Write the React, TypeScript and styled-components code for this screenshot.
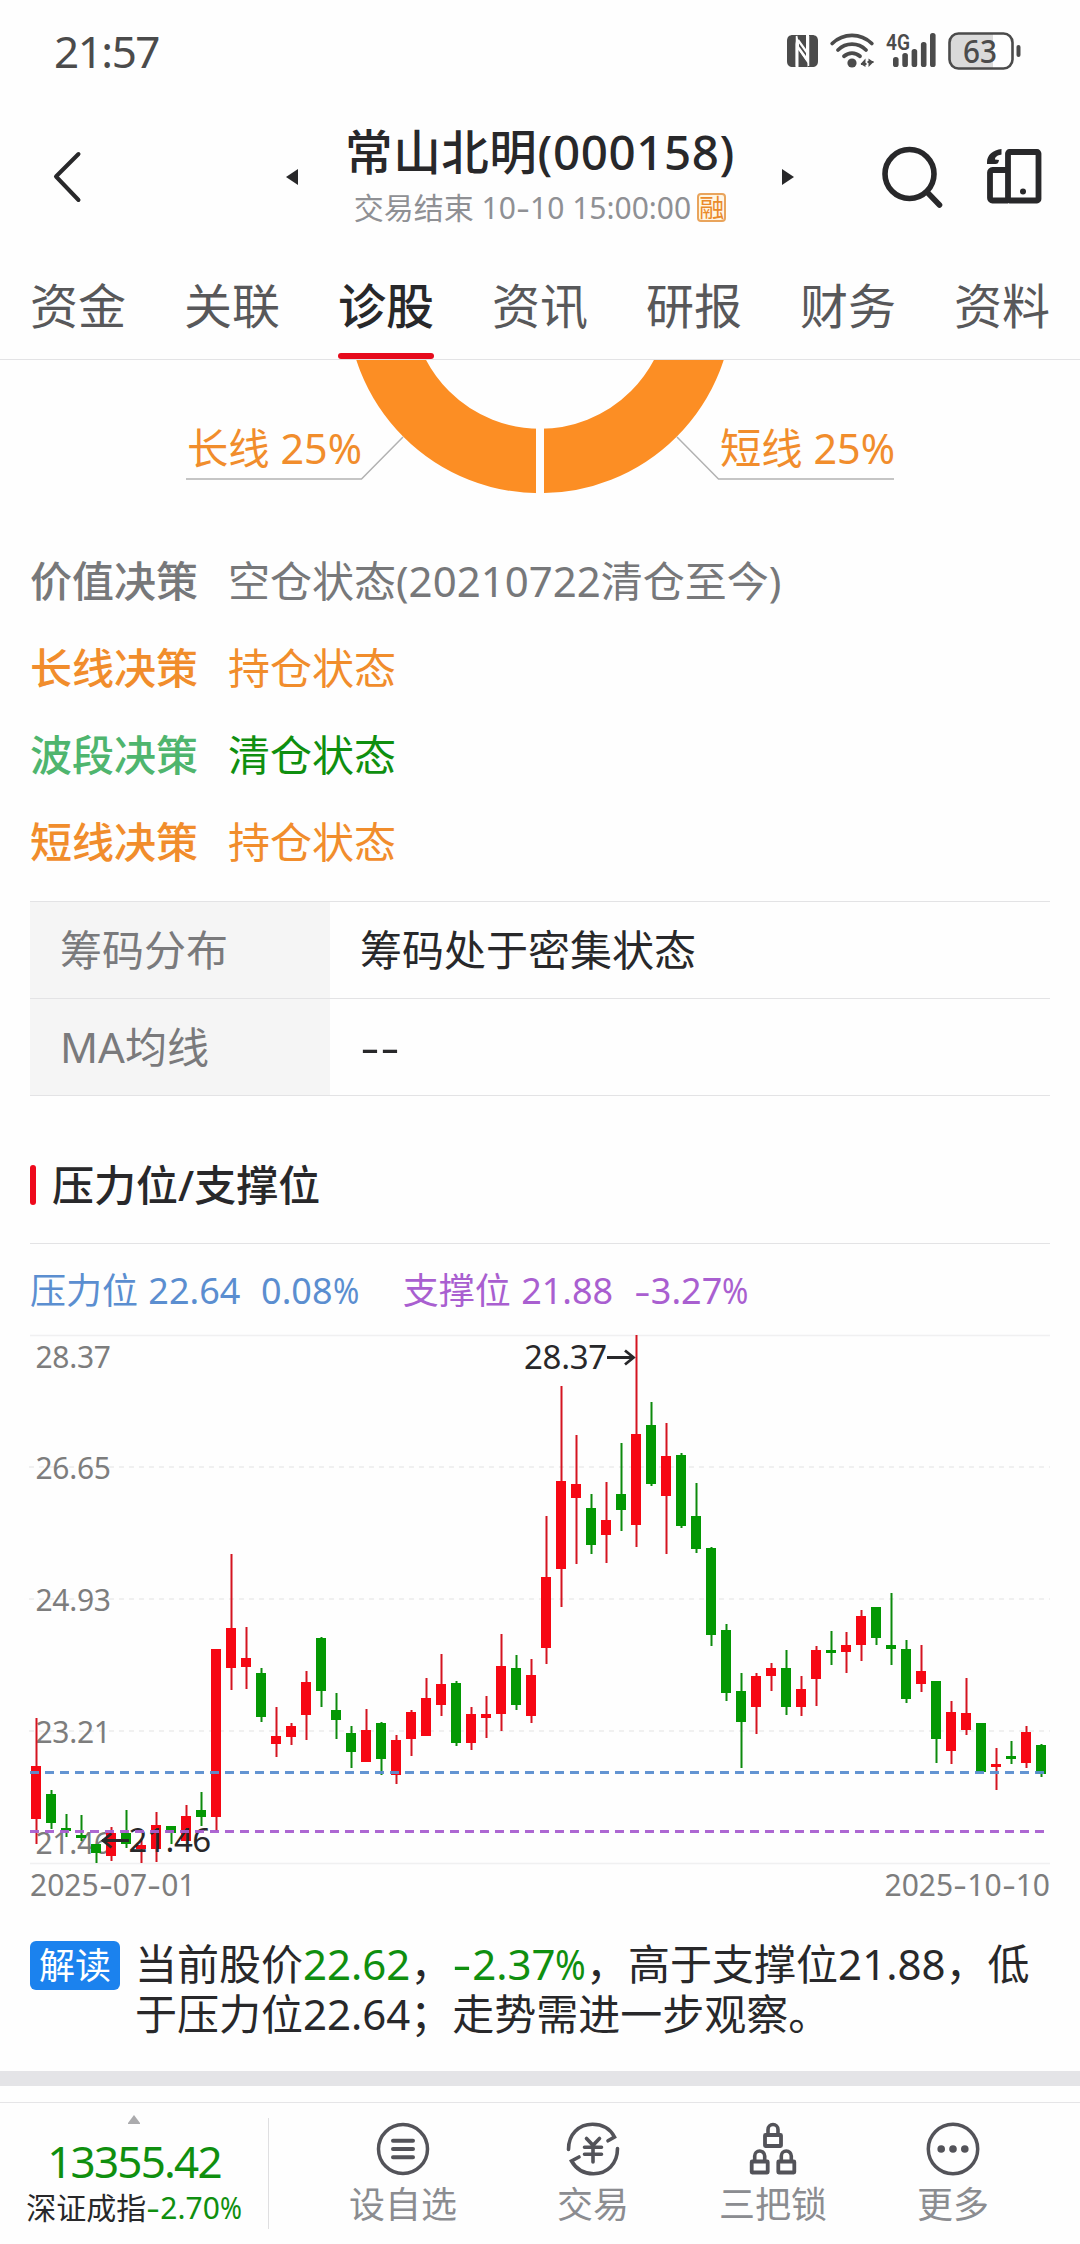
import React from 'react';
import styled, { createGlobalStyle } from 'styled-components';

const GlobalStyle = createGlobalStyle`
  * { box-sizing: border-box; }
  body {
    margin: 0;
    background: #fefefe;
    font-family: "Noto Sans", "Noto Sans CJK SC", sans-serif;
    color: #28282a;
  }
  svg { display: block; overflow: visible; }
`;

const ORANGE = '#f18d2c';
const GREEN = '#0f8f0f';
const BLUE = '#5b8ed0';
const PURPLE = '#a95fd0';

const Screen = styled.div`
  width: 1080px;
  height: 2244px;
  display: flex;
  flex-direction: column;
  overflow: hidden;
  background: #fefefe;
`;

const StatusBar = styled.div`
  height: 104px;
  flex: none;
  display: flex;
  align-items: center;
  justify-content: space-between;
  padding: 0 58px 3px 54px;
  color: #4b4b4b;
`;

const Clock = styled.span`
  font-size: 44px;
  line-height: 60px;
  letter-spacing: -1.5px;
`;

const StatusIcons = styled.div`
  display: flex;
  align-items: center;
  gap: 12px;
`;

const Header = styled.header`
  height: 146px;
  flex: none;
  display: flex;
  align-items: center;
  padding: 0 38px 1px 48px;
`;

const BackButton = styled.div`
  width: 238px;
`;

const TitleBlock = styled.div`
  width: 484px;
  display: flex;
  flex-direction: column;
  align-items: center;
`;

const Title = styled.div`
  font-size: 47.5px;
  line-height: 62px;
  font-weight: 500;
  letter-spacing: 0.6px;
`;

const Subtitle = styled.div`
  display: flex;
  align-items: center;
  gap: 6px;
  font-size: 30px;
  line-height: 50px;
  color: #8f9094;
`;

const MarginBadge = styled.span`
  width: 29px;
  height: 29px;
  display: flex;
  align-items: center;
  justify-content: center;
  border: 2px solid #e9a45c;
  border-radius: 4px;
  background: #fff6e4;
  color: #ea8a2a;
  font-size: 25px;
  line-height: 25px;
`;

const HeaderActions = styled.div`
  margin-left: auto;
  display: flex;
  align-items: center;
  gap: 44px;
`;

const Tabs = styled.nav`
  height: 110px;
  flex: none;
  display: flex;
  justify-content: space-between;
  padding: 0 30px;
  border-bottom: 1px solid #e3e3e5;
`;

const Tab = styled.div<{ $active?: boolean }>`
  display: flex;
  flex-direction: column;
  justify-content: space-between;
  font-size: 48px;
  line-height: 64px;
  padding-top: 24px;
  font-weight: ${(p) => (p.$active ? 500 : 400)};
  color: ${(p) => (p.$active ? '#28282a' : '#58585a')};
  &::after {
    content: '';
    height: 6px;
    border-radius: 3px;
    background: ${(p) => (p.$active ? '#e60b1c' : 'transparent')};
  }
`;

const DonutArea = styled.div`
  height: 177px;
  flex: none;
`;

const Decisions = styled.section`
  flex: none;
  padding: 0 30px;
  height: 364px;
`;

const Decision = styled.div`
  display: flex;
  gap: 30px;
  height: 87px;
  align-items: center;
  font-size: 42px;
  line-height: 60px;
`;

const DecisionName = styled.span<{ $color: string }>`
  font-weight: 500;
  color: ${(p) => p.$color};
`;

const DecisionState = styled.span<{ $color: string }>`
  color: ${(p) => p.$color};
`;

const FactTable = styled.div`
  flex: none;
  margin: 0 30px;
  border-top: 1px solid #e3e3e5;
`;

const FactRow = styled.div`
  height: 97px;
  display: flex;
  border-bottom: 1px solid #e3e3e5;
  font-size: 42px;
  line-height: 60px;
`;

const FactLabel = styled.div`
  width: 300px;
  display: flex;
  align-items: center;
  padding-left: 30px;
  background: #f5f5f5;
  color: #7a7a7c;
`;

const FactValue = styled.div`
  flex: 1;
  display: flex;
  align-items: center;
  padding-left: 30px;
`;

const SectionTitle = styled.h2`
  flex: none;
  margin: 47px 30px 0;
  height: 101px;
  display: flex;
  align-items: center;
  gap: 16px;
  border-bottom: 1px solid #e3e3e5;
  padding-bottom: 17px;
  font-size: 42px;
  line-height: 60px;
  font-weight: 500;
  &::before {
    content: '';
    width: 6px;
    height: 40px;
    border-radius: 3px;
    background: #ee0a1c;
  }
`;

const Legend = styled.div`
  flex: none;
  height: 91px;
  padding: 2px 30px 0;
  display: flex;
  align-items: center;
  gap: 44px;
  font-size: 36px;
  line-height: 50px;
  word-spacing: 1px;
`;

const LegendItem = styled.span<{ $color: string }>`
  color: ${(p) => p.$color};
  white-space: pre;
`;

const ChartArea = styled.div`
  flex: none;
  margin: 0 30px;
  height: 529px;
`;

const DateAxis = styled.div`
  flex: none;
  display: flex;
  justify-content: space-between;
  margin: 0 30px;
  height: 75px;
  font-size: 30px;
  line-height: 42px;
  color: #7d7d7d;
`;

const Reading = styled.section`
  flex: none;
  display: flex;
  align-items: flex-start;
  gap: 15px;
  padding: 0 30px;
  height: 132px;
`;

const ReadingTag = styled.span`
  flex: none;
  width: 90px;
  height: 49px;
  margin-top: 2px;
  display: flex;
  align-items: center;
  justify-content: center;
  border-radius: 6px;
  background: #1b82ee;
  color: #fff;
  font-size: 36px;
  line-height: 49px;
`;

const ReadingText = styled.p`
  margin: 0;
  font-size: 42px;
  line-height: 49.5px;
`;

const Down = styled.span`
  color: ${GREEN};
`;

const Hyphen = styled.span`
  display: inline-block;
  width: 0.47em;
  text-align: center;
  transform: scaleX(1.4);
`;

const Percent = styled.span`
  display: inline-block;
  width: 0.73em;
  transform: scaleX(0.88);
  transform-origin: 0 50%;
`;

/* Quote figures: a wide hyphen and a narrow percent sign beside the digits */
function Figures({ children }: { children: string }) {
  return (
    <>
      {children.split(/([-%])/).map((part, i) => {
        if (part === '-') return <Hyphen key={i}>-</Hyphen>;
        if (part === '%') return <Percent key={i}>%</Percent>;
        return part;
      })}
    </>
  );
}

const Band = styled.div`
  flex: none;
  height: 15px;
  background: #e4e4e7;
`;

const BottomBar = styled.footer`
  flex: 1;
  margin-top: 16px;
  border-top: 1px solid #e5e5e7;
  display: flex;
  align-items: flex-start;
`;

const IndexPanel = styled.div`
  width: 269px;
  height: 111px;
  margin-top: 15px;
  display: flex;
  flex-direction: column;
  align-items: center;
  border-right: 1px solid #dfdfe1;
  & > svg { margin-top: -3px; }
`;

const IndexValue = styled.div`
  margin-top: 7px;
  font-size: 44px;
  line-height: 60px;
  letter-spacing: -1.8px;
  color: ${GREEN};
`;

const IndexName = styled.div`
  font-size: 30px;
  line-height: 34px;
  white-space: nowrap;
`;

const NavItems = styled.div`
  display: flex;
  padding: 19px 0 0 44px;
`;

const NavItem = styled.div<{ $gap?: number }>`
  width: 180px;
  margin-right: ${(p) => p.$gap || 0}px;
  display: flex;
  flex-direction: column;
  align-items: center;
  gap: 3px;
  font-size: 36px;
  line-height: 52px;
  color: #8b8c90;
`;

/* [rising, high, body top, body bottom, low] on the 1335..1863 vertical scale */
type Candle = [number, number, number, number, number];
const candles: Candle[] = [
  [1, 1718, 1766, 1819, 1844], [0, 1790, 1794, 1823, 1829], [0, 1814, 1828, 1831, 1837], [0, 1815, 1835, 1838, 1841],
  [0, 1844, 1844, 1853, 1863], [1, 1827, 1833, 1856, 1861], [0, 1810, 1833, 1844, 1848], [1, 1839, 1845, 1849, 1863],
  [1, 1812, 1825, 1849, 1862], [0, 1826, 1826, 1833, 1844], [1, 1805, 1816, 1841, 1841], [0, 1792, 1810, 1817, 1826],
  [1, 1649, 1649, 1817, 1831], [1, 1554, 1628, 1668, 1690], [1, 1627, 1658, 1667, 1689], [0, 1668, 1673, 1717, 1722],
  [1, 1707, 1736, 1744, 1757], [1, 1723, 1726, 1737, 1745], [1, 1671, 1682, 1715, 1740], [0, 1637, 1638, 1691, 1707],
  [0, 1693, 1710, 1720, 1739], [0, 1726, 1733, 1752, 1768], [1, 1709, 1730, 1762, 1762], [0, 1722, 1723, 1759, 1775],
  [1, 1735, 1740, 1775, 1784], [1, 1710, 1712, 1739, 1756], [1, 1678, 1698, 1736, 1736], [1, 1654, 1684, 1705, 1716],
  [0, 1681, 1683, 1743, 1746], [1, 1707, 1714, 1743, 1750], [1, 1696, 1714, 1718, 1738], [1, 1634, 1666, 1714, 1731],
  [0, 1655, 1668, 1705, 1710], [1, 1659, 1675, 1716, 1723], [1, 1516, 1577, 1648, 1664], [1, 1386, 1481, 1569, 1607],
  [1, 1435, 1484, 1498, 1564], [0, 1494, 1508, 1545, 1554], [1, 1482, 1520, 1535, 1563], [0, 1443, 1494, 1510, 1531],
  [1, 1335, 1434, 1525, 1547], [0, 1402, 1425, 1484, 1486], [1, 1423, 1456, 1496, 1554], [0, 1453, 1455, 1526, 1528],
  [0, 1483, 1516, 1549, 1553], [0, 1547, 1548, 1635, 1646], [0, 1624, 1630, 1693, 1701], [0, 1673, 1691, 1722, 1768],
  [1, 1673, 1676, 1707, 1734], [1, 1663, 1668, 1676, 1691], [0, 1650, 1668, 1707, 1715], [1, 1676, 1689, 1707, 1716],
  [1, 1646, 1650, 1679, 1706], [0, 1631, 1650, 1653, 1665], [1, 1632, 1645, 1652, 1673], [1, 1610, 1616, 1645, 1661],
  [0, 1607, 1607, 1638, 1645], [0, 1593, 1645, 1649, 1665], [0, 1640, 1649, 1699, 1703], [1, 1645, 1671, 1684, 1692],
  [0, 1681, 1681, 1739, 1763], [1, 1701, 1712, 1751, 1764], [1, 1678, 1713, 1730, 1735], [0, 1723, 1723, 1772, 1772],
  [1, 1748, 1764, 1767, 1790], [0, 1741, 1756, 1759, 1764], [1, 1726, 1732, 1763, 1768], [0, 1744, 1745, 1774, 1777],
];

const AxisText = styled.text`
  font-size: 30px;
  fill: #7d7d7d;
`;

const MarkText = styled.text`
  font-size: 33px;
  fill: #28282a;
`;

const axisLabels: [string, number][] = [
  ['28.37', 1368], ['26.65', 1479], ['24.93', 1611], ['23.21', 1743], ['21.46', 1854],
];

function CandleChart() {
  return (
    <svg width="1020" height="529" viewBox="30 1335 1020 529">
      <path d="M30 1335.5H1050M30 1863.5H1050" stroke="#f0f0f1" strokeWidth="1.4" />
      {[1467, 1599, 1731].map((y) => (
        <path key={y} d={`M29 ${y}H1050`} stroke="#f0f0f0" strokeWidth="2" strokeDasharray="5 5" />
      ))}
      {axisLabels.map(([label, y]) => (
        <AxisText key={label} x="35.5" y={y} letterSpacing="-0.3">{label}</AxisText>
      ))}
      {candles.map(([up, high, top, bottom, low], i) => {
        const x = 31 + i * 15;
        return (
          <g key={i}>
            <path d={`M${x + 5.5} ${high}V${low}`} stroke={up ? '#d41420' : '#0d8a0d'} strokeWidth="2" />
            <rect x={x} y={top} width="10" height={bottom - top} fill={up ? '#f60713' : '#039803'} />
          </g>
        );
      })}
      <path d="M607 1357.5H634M625 1350.5l8.5 7l-8.5 7" fill="none" stroke="#28282a" strokeWidth="2.8" />
      <MarkText x="524" y="1369" letterSpacing="-0.3">28.37</MarkText>
      <path d="M129 1840.5H102M111.5 1833.5l-8.5 7l8.5 7" fill="none" stroke="#28282a" strokeWidth="2.8" />
      <MarkText x="128.5" y="1852" letterSpacing="-0.4">21.46</MarkText>
      <path d="M30 1772.5H1045" stroke={BLUE} strokeOpacity="0.95" strokeWidth="3" strokeDasharray="9 6" />
      <path d="M30 1831.5H1045" stroke={PURPLE} strokeOpacity="0.95" strokeWidth="3" strokeDasharray="9 6" />
    </svg>
  );
}

const SliceText = styled.text`
  font-size: 42px;
  fill: ${ORANGE};
`;

function Donut() {
  return (
    <svg width="1080" height="177" viewBox="0 360 1080 177">
      <defs>
        <clipPath id="belowTabs"><rect x="0" y="360" width="1080" height="177" /></clipPath>
      </defs>
      <g clipPath="url(#belowTabs)">
        <circle cx="540" cy="300" r="161" fill="none" stroke="#fc8e24" strokeWidth="64.5" />
        <rect x="536" y="400" width="8" height="100" fill="#fefefe" />
      </g>
      <path d="M186 479H361.500L403 437" fill="none" stroke="#b2b2b2" strokeWidth="1.5" />
      <path d="M894 479H718.500L677 437" fill="none" stroke="#b2b2b2" strokeWidth="1.5" />
      <SliceText x="187" y="464" textLength="175" lengthAdjust="spacingAndGlyphs">长线 25%</SliceText>
      <SliceText x="720" y="464" textLength="175" lengthAdjust="spacingAndGlyphs">短线 25%</SliceText>
    </svg>
  );
}

function NfcIcon() {
  return (
    <svg width="31" height="32" viewBox="0 0 31 32">
      <path d="M6 0h4l-1.500 9v23H6c-4 0-6-2-6-6V6c0-4 2-6 6-6z" fill="#4b4b4b" />
      <path d="M25 0h-3v22l-1.500 10H25c4 0 6-2 6-6V6c0-4-2-6-6-6z" fill="#4b4b4b" />
      <path d="M10 0h9v18L12 8zM19 14v8l-7-9v-6zM11.500 32V15l9 13v4z" fill="#4b4b4b" />
      <path d="M11 5l9 12.500M11 12l9 12.500" stroke="#fefefe" strokeWidth="2.200" />
      <path d="M9.500 1v30M21.500 1v30" stroke="#fefefe" strokeWidth="1.500" />
    </svg>
  );
}

function WifiIcon() {
  return (
    <svg width="44" height="35" viewBox="0 0 44 35">
      <g fill="none" stroke="#4b4b4b" strokeWidth="3.8" strokeLinecap="round">
        <path d="M2.200 10.500C13.500-.300 30.500-.300 41.800 10.500" />
        <path d="M8 17c8-7.800 20-7.800 28 0" />
        <path d="M14 23.200c4.800-4.200 11.200-4.200 16 0" />
      </g>
      <circle cx="22" cy="30" r="4.6" fill="#4b4b4b" />
      <path d="M35.500 25.500V34l-5-3zM38.500 34v-8.500l5 3.500z" fill="#4b4b4b" />
      <path d="M31 31h5.500M37.500 29h6" stroke="#4b4b4b" strokeWidth="1.8" />
    </svg>
  );
}

const NetText = styled.text`
  font-family: Roboto, sans-serif;
  font-size: 22px;
  font-weight: 600;
  fill: #4b4b4b;
`;

function SignalIcon() {
  const bars = [[7, 24], [16.3, 20], [25.6, 16], [34.9, 9], [44, 0]];
  return (
    <svg width="50" height="35" viewBox="0 0 50 35">
      <NetText x="0" y="16.5" textLength="24" lengthAdjust="spacingAndGlyphs">4G</NetText>
      {bars.map(([x, y]) => (
        <rect key={x} x={x} y={y} width="5.6" height={34 - y} rx="2.6" fill="#4b4b4b" />
      ))}
    </svg>
  );
}

const BatteryText = styled.text`
  font-size: 32px;
  font-weight: 500;
  fill: #4b4b4b;
`;

function BatteryIcon() {
  return (
    <svg width="74" height="38" viewBox="0 0 74 38">
      <path d="M11 1.500h34v35H11a9.500 9.500 0 0 1-9.500-9.500V11A9.500 9.500 0 0 1 11 1.500z" fill="#dadada" />
      <rect x="1.5" y="1.5" width="63" height="35" rx="9" fill="none" stroke="#4b4b4b" strokeWidth="2.6" />
      <rect x="68.5" y="13" width="4" height="12" rx="2" fill="#4b4b4b" />
      <BatteryText x="15" y="30.5" textLength="34" lengthAdjust="spacingAndGlyphs">63</BatteryText>
    </svg>
  );
}

function SearchIcon() {
  return (
    <svg width="62" height="62" viewBox="0 0 62 62" fill="none" stroke="#28282a" strokeWidth="5.6">
      <circle cx="28.5" cy="28" r="24.5" />
      <path d="M46 46L58.500 59" strokeLinecap="round" />
    </svg>
  );
}

function DevicesIcon() {
  return (
    <svg width="55" height="55" viewBox="0 0 55 55" fill="none" stroke="#28282a" strokeWidth="5.8" strokeLinejoin="round">
      <rect x="21" y="3" width="30.5" height="48.5" rx="1.5" />
      <path d="M21 21H5.500c-1.500 0-2.500 1-2.500 2.500v25.500c0 1.500 1 2.500 2.500 2.500H21" />
      <circle cx="36" cy="42.5" r="3" fill="#28282a" stroke="none" />
      <path d="M14.500 0C6 1 0 6 0 13v2h8.500c2 0 3-1 3.500-4l-4-.500C8 8 10 6.500 14.500 5.500z" fill="#28282a" stroke="none" />
    </svg>
  );
}

function ListIcon() {
  return (
    <svg width="54" height="54" viewBox="0 0 54 54" fill="none" stroke="#535359" strokeLinecap="round">
      <circle cx="27" cy="27" r="24.5" strokeWidth="3.5" />
      <path d="M17 18.700h20M17 27h20M17 35.200h20" strokeWidth="4" />
    </svg>
  );
}

function TradeIcon() {
  return (
    <svg width="54" height="54" viewBox="0 0 54 54" fill="none" stroke="#535359" strokeWidth="3.6" strokeLinecap="round">
      <path d="M2.500 27.500C2.500 12 13 2.300 26.500 2.300c9.500 0 17.500 4.200 22 12.700L42 18.800" />
      <path d="M51.500 26.500C51.500 42 41 51.700 27.500 51.700c-9.500 0-17-4-22-12.700l7.500-4" />
      <path d="M20.500 16.500l6.500 6.800 6.500-6.800M27 23.500v16.500M18.500 25.200h17M18.500 32.200h17" />
    </svg>
  );
}

function LocksIcon() {
  const lock = (x: number, y: number) => (
    <g key={`${x}-${y}`}>
      <rect x={x - 8} y={y + 11} width="16" height="11" rx="0.5" strokeWidth="3.8" strokeLinejoin="round" />
      <path d={`M${x - 5} ${y + 10}V${y + 5.5}a5 5 0 0 1 10 0V${y + 10}`} strokeWidth="3.6" />
    </g>
  );
  return (
    <svg width="54" height="54" viewBox="0 0 54 54" fill="none" stroke="#535359">
      {lock(27, 2)}
      {lock(13.7, 28.5)}
      {lock(40.3, 28.5)}
    </svg>
  );
}

function MoreIcon() {
  return (
    <svg width="54" height="54" viewBox="0 0 54 54">
      <circle cx="27" cy="27" r="24.7" fill="none" stroke="#535359" strokeWidth="3.5" />
      {[15.2, 27, 38.8].map((x) => (
        <circle key={x} cx={x} cy="27" r="3.8" fill="#535359" />
      ))}
    </svg>
  );
}

const tabs = ['资金', '关联', '诊股', '资讯', '研报', '财务', '资料'];

export default function App() {
  return (
    <>
      <GlobalStyle />
      <Screen>
        <StatusBar>
          <Clock>21:57</Clock>
          <StatusIcons>
            <NfcIcon />
            <WifiIcon />
            <SignalIcon />
            <BatteryIcon />
          </StatusIcons>
        </StatusBar>
        <Header>
          <BackButton>
            <svg width="40" height="54" viewBox="0 0 40 54" fill="none">
              <path d="M30.500 4L8 26.500L30.500 50" stroke="#28282a" strokeWidth="4" strokeLinecap="round" strokeLinejoin="round" />
            </svg>
          </BackButton>
          <svg width="12" height="18" viewBox="0 0 12 18"><path d="M12 1v16L0 9z" fill="#28282a" /></svg>
          <TitleBlock>
            <Title>常山北明(000158)</Title>
            <Subtitle>
              <span><Figures>交易结束 10-10 15:00:00</Figures></span>
              <MarginBadge>融</MarginBadge>
            </Subtitle>
          </TitleBlock>
          <svg width="12" height="18" viewBox="0 0 12 18"><path d="M0 1v16L12 9z" fill="#28282a" /></svg>
          <HeaderActions>
            <SearchIcon />
            <DevicesIcon />
          </HeaderActions>
        </Header>
        <Tabs>
          {tabs.map((t) => (
            <Tab key={t} $active={t === '诊股'}>{t}</Tab>
          ))}
        </Tabs>
        <DonutArea>
          <Donut />
        </DonutArea>
        <Decisions>
          <Decision>
            <DecisionName $color="#77787a">价值决策</DecisionName>
            <DecisionState $color="#77787a">空仓状态(20210722清仓至今)</DecisionState>
          </Decision>
          <Decision>
            <DecisionName $color={ORANGE}>长线决策</DecisionName>
            <DecisionState $color={ORANGE}>持仓状态</DecisionState>
          </Decision>
          <Decision>
            <DecisionName $color="#4fb56e">波段决策</DecisionName>
            <DecisionState $color={GREEN}>清仓状态</DecisionState>
          </Decision>
          <Decision>
            <DecisionName $color={ORANGE}>短线决策</DecisionName>
            <DecisionState $color={ORANGE}>持仓状态</DecisionState>
          </Decision>
        </Decisions>
        <FactTable>
          <FactRow>
            <FactLabel>筹码分布</FactLabel>
            <FactValue>筹码处于密集状态</FactValue>
          </FactRow>
          <FactRow>
            <FactLabel>MA均线</FactLabel>
            <FactValue><Figures>--</Figures></FactValue>
          </FactRow>
        </FactTable>
        <SectionTitle>压力位/支撑位</SectionTitle>
        <Legend>
          <LegendItem $color={BLUE}><Figures>压力位 22.64  0.08%</Figures></LegendItem>
          <LegendItem $color={PURPLE}><Figures>支撑位 21.88  -3.27%</Figures></LegendItem>
        </Legend>
        <ChartArea>
          <CandleChart />
        </ChartArea>
        <DateAxis>
          <span><Figures>2025-07-01</Figures></span>
          <span><Figures>2025-10-10</Figures></span>
        </DateAxis>
        <Reading>
          <ReadingTag>解读</ReadingTag>
          <ReadingText>
            当前股价<Down>22.62</Down>，<Down><Figures>-2.37%</Figures></Down>，高于支撑位21.88，低于压力位22.64；走势需进一步观察。
          </ReadingText>
        </Reading>
        <Band />
        <BottomBar>
          <IndexPanel>
            <svg width="12" height="9" viewBox="0 0 12 9"><path d="M6 0l6 8v1H0V8z" fill="#ababad" /></svg>
            <IndexValue>13355.42</IndexValue>
            <IndexName>深证成指<Down><Figures>-2.70%</Figures></Down></IndexName>
          </IndexPanel>
          <NavItems>
            <NavItem $gap={10}><ListIcon />设自选</NavItem>
            <NavItem><TradeIcon />交易</NavItem>
            <NavItem><LocksIcon />三把锁</NavItem>
            <NavItem><MoreIcon />更多</NavItem>
          </NavItems>
        </BottomBar>
      </Screen>
    </>
  );
}
